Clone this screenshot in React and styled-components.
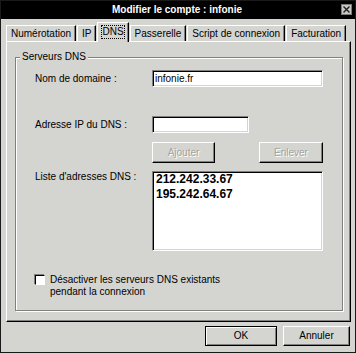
import React from 'react';
import styled, { createGlobalStyle } from 'styled-components';

const FACE = '#d4d4d0';
const SHADOW = '#808080';
const LIGHT = '#ffffff';
const DARK = '#000000';

const GlobalStyle = createGlobalStyle`
    html, body {
        margin: 0;
        padding: 0;
        background: ${FACE};
    }
    body {
        font-family: "Liberation Sans", Arial, Helvetica, sans-serif;
        font-size: 10px;
        color: #000;
    }
`;

const Window = styled.div`
    width: 356px;
    height: 353px;
    box-sizing: border-box;
    border: 1px solid #1a1a1a;
    background: ${FACE};
    display: flex;
    flex-direction: column;
`;

const TitleBar = styled.div`
    height: 18px;
    background: #000;
    color: #fff;
    display: flex;
    align-items: center;
    padding: 0 3px 1px 12px;
    box-sizing: border-box;
`;

const TitleText = styled.div`
    flex: 1;
    text-align: center;
    font-weight: bold;
    font-size: 10px;
    line-height: 1;
`;

const CloseButton = styled.div`
    width: 11px;
    height: 11px;
    display: flex;
`;

const Body = styled.div`
    padding: 3px 4px 0 5px;
    display: flex;
    flex-direction: column;
`;

const TabRow = styled.div`
    display: flex;
    align-items: flex-end;
    gap: 1px;
    height: 19px;
`;

const Tab = styled.div`
    box-sizing: border-box;
    height: ${p => (p.$active ? '20px' : '16px')};
    margin-bottom: ${p => (p.$active ? '-1px' : '0')};
    position: ${p => (p.$active ? 'relative' : 'static')};
    z-index: ${p => (p.$active ? 1 : 0)};
    padding: 0 ${p => (p.$active ? '3px' : '4px')};
    background: ${FACE};
    border-left: 1px solid ${LIGHT};
    border-top: 1px solid ${LIGHT};
    border-right: 1px solid ${DARK};
    box-shadow: inset -1px 0 0 ${SHADOW};
    display: flex;
    align-items: center;
    white-space: nowrap;
    line-height: 1;
    padding-bottom: ${p => (p.$active ? '2px' : '0')};
`;

const FocusText = styled.span`
    border: 1px dotted #000;
    padding: 1px 0;
`;

const Panel = styled.div`
    height: 281px;
    box-sizing: border-box;
    border-left: 1px solid ${LIGHT};
    border-top: 1px solid ${LIGHT};
    border-right: 1px solid ${DARK};
    border-bottom: 1px solid ${DARK};
    box-shadow: inset -1px -1px 0 ${SHADOW};
    padding: 15px 7px 10px 8px;
    display: flex;
    flex-direction: column;
`;

const GroupBox = styled.div`
    position: relative;
    flex: 1;
    border: 1px solid ${SHADOW};
    box-shadow: inset 1px 1px 0 ${LIGHT}, 1px 1px 0 ${LIGHT};
    padding: 12px 0 0 19px;
    display: flex;
    flex-direction: column;
`;

const GroupTitle = styled.span`
    position: absolute;
    top: -7px;
    left: 4px;
    padding: 0 2px;
    background: ${FACE};
    line-height: 12px;
`;

const Row = styled.div`
    display: grid;
    grid-template-columns: 117px auto;
    align-items: ${p => p.$align || 'center'};
    margin-top: ${p => p.$top || 0}px;
`;

const Label = styled.span`
    line-height: 12px;
    padding-top: ${p => p.$pad || 0}px;
`;

const TextField = styled.div`
    width: ${p => p.$width}px;
    height: 17px;
    box-sizing: border-box;
    background: #fff;
    border-top: 1px solid ${SHADOW};
    border-left: 1px solid ${SHADOW};
    border-right: 1px solid ${LIGHT};
    border-bottom: 1px solid ${LIGHT};
    box-shadow: inset 1px 1px 0 ${DARK}, inset -1px -1px 0 ${FACE};
    padding: 0 2px;
    display: flex;
    align-items: center;
    line-height: 1;
`;

const ButtonPair = styled.div`
    width: 171px;
    display: flex;
    justify-content: space-between;
`;

const Button = styled.div`
    width: ${p => p.$width}px;
    height: ${p => p.$height || 20}px;
    box-sizing: border-box;
    background: ${FACE};
    border-top: 1px solid ${p => (p.$default ? DARK : LIGHT)};
    border-left: 1px solid ${p => (p.$default ? DARK : LIGHT)};
    border-right: 1px solid ${DARK};
    border-bottom: 1px solid ${DARK};
    box-shadow: ${p => (p.$default
        ? `inset 1px 1px 0 ${LIGHT}, inset -1px -1px 0 ${SHADOW}`
        : `inset -1px -1px 0 ${SHADOW}`)};
    display: flex;
    align-items: center;
    justify-content: center;
    line-height: 1;
    color: ${p => (p.$disabled ? '#a4a4a0' : '#000')};
    text-shadow: ${p => (p.$disabled ? `1px 1px 0 ${LIGHT}` : 'none')};
`;

const ListBox = styled.div`
    width: 171px;
    height: 80px;
    box-sizing: border-box;
    background: #fff;
    border-top: 1px solid ${SHADOW};
    border-left: 1px solid ${SHADOW};
    border-right: 1px solid ${LIGHT};
    border-bottom: 1px solid ${LIGHT};
    box-shadow: inset 1px 1px 0 ${DARK}, inset -1px -1px 0 ${FACE};
    padding: 0 3px;
`;

const ListItem = styled.div`
    font-size: 12px;
    font-weight: bold;
    line-height: 15px;
`;

const CheckRow = styled.div`
    display: flex;
    align-items: flex-start;
    gap: 5px;
    margin-top: 23px;
`;

const CheckBox = styled.div`
    width: 10px;
    height: 10px;
    margin-top: 1px;
    box-sizing: border-box;
    background: #fff;
    border-top: 1px solid ${DARK};
    border-left: 1px solid ${DARK};
    border-right: 1px solid ${LIGHT};
    border-bottom: 1px solid ${LIGHT};
    box-shadow: -1px -1px 0 ${SHADOW};
`;

const CheckLabel = styled.div`
    line-height: 12px;
`;

const Footer = styled.div`
    display: flex;
    justify-content: flex-end;
    align-items: flex-start;
    gap: 6px;
    padding: 4px 1px 0 0;
`;

const tabs = ['Numérotation', 'IP', 'DNS', 'Passerelle', 'Script de connexion', 'Facturation'];

const App = () => {
    return (
        <>
            <GlobalStyle />
            <Window>
                <TitleBar>
                    <TitleText>Modifier le compte : infonie</TitleText>
                    <CloseButton>
                        <svg width="11" height="11" viewBox="0 0 11 11">
                            <rect x="0.5" y="0.5" width="10" height="10" fill="#c8c8c4" stroke="#7a7a7a" />
                            <path d="M2.5 2.5 L8.5 8.5 M8.5 2.5 L2.5 8.5" stroke="#202020" strokeWidth="1.4" />
                        </svg>
                    </CloseButton>
                </TitleBar>
                <Body>
                    <TabRow>
                        {tabs.map(name => (
                            <Tab key={name} $active={name === 'DNS'}>
                                {name === 'DNS' ? <FocusText>{name}</FocusText> : name}
                            </Tab>
                        ))}
                    </TabRow>
                    <Panel>
                        <GroupBox>
                            <GroupTitle>Serveurs DNS</GroupTitle>
                            <Row>
                                <Label>Nom de domaine :</Label>
                                <TextField $width={171}>infonie.fr</TextField>
                            </Row>
                            <Row $top={29}>
                                <Label>Adresse IP du DNS :</Label>
                                <TextField $width={97} />
                            </Row>
                            <Row $top={9}>
                                <span />
                                <ButtonPair>
                                    <Button $width={63} $height={21} $disabled>Ajouter</Button>
                                    <Button $width={64} $height={21} $disabled>Enlever</Button>
                                </ButtonPair>
                            </Row>
                            <Row $top={8} $align="start">
                                <Label>Liste d'adresses DNS :</Label>
                                <ListBox>
                                    <ListItem>212.242.33.67</ListItem>
                                    <ListItem>195.242.64.67</ListItem>
                                </ListBox>
                            </Row>
                            <CheckRow>
                                <CheckBox />
                                <CheckLabel>
                                    Désactiver les serveurs DNS existants<br />
                                    pendant la connexion
                                </CheckLabel>
                            </CheckRow>
                        </GroupBox>
                    </Panel>
                    <Footer>
                        <Button $width={72} $default>OK</Button>
                        <Button $width={67}>Annuler</Button>
                    </Footer>
                </Body>
            </Window>
        </>
    );
};

export default App;
